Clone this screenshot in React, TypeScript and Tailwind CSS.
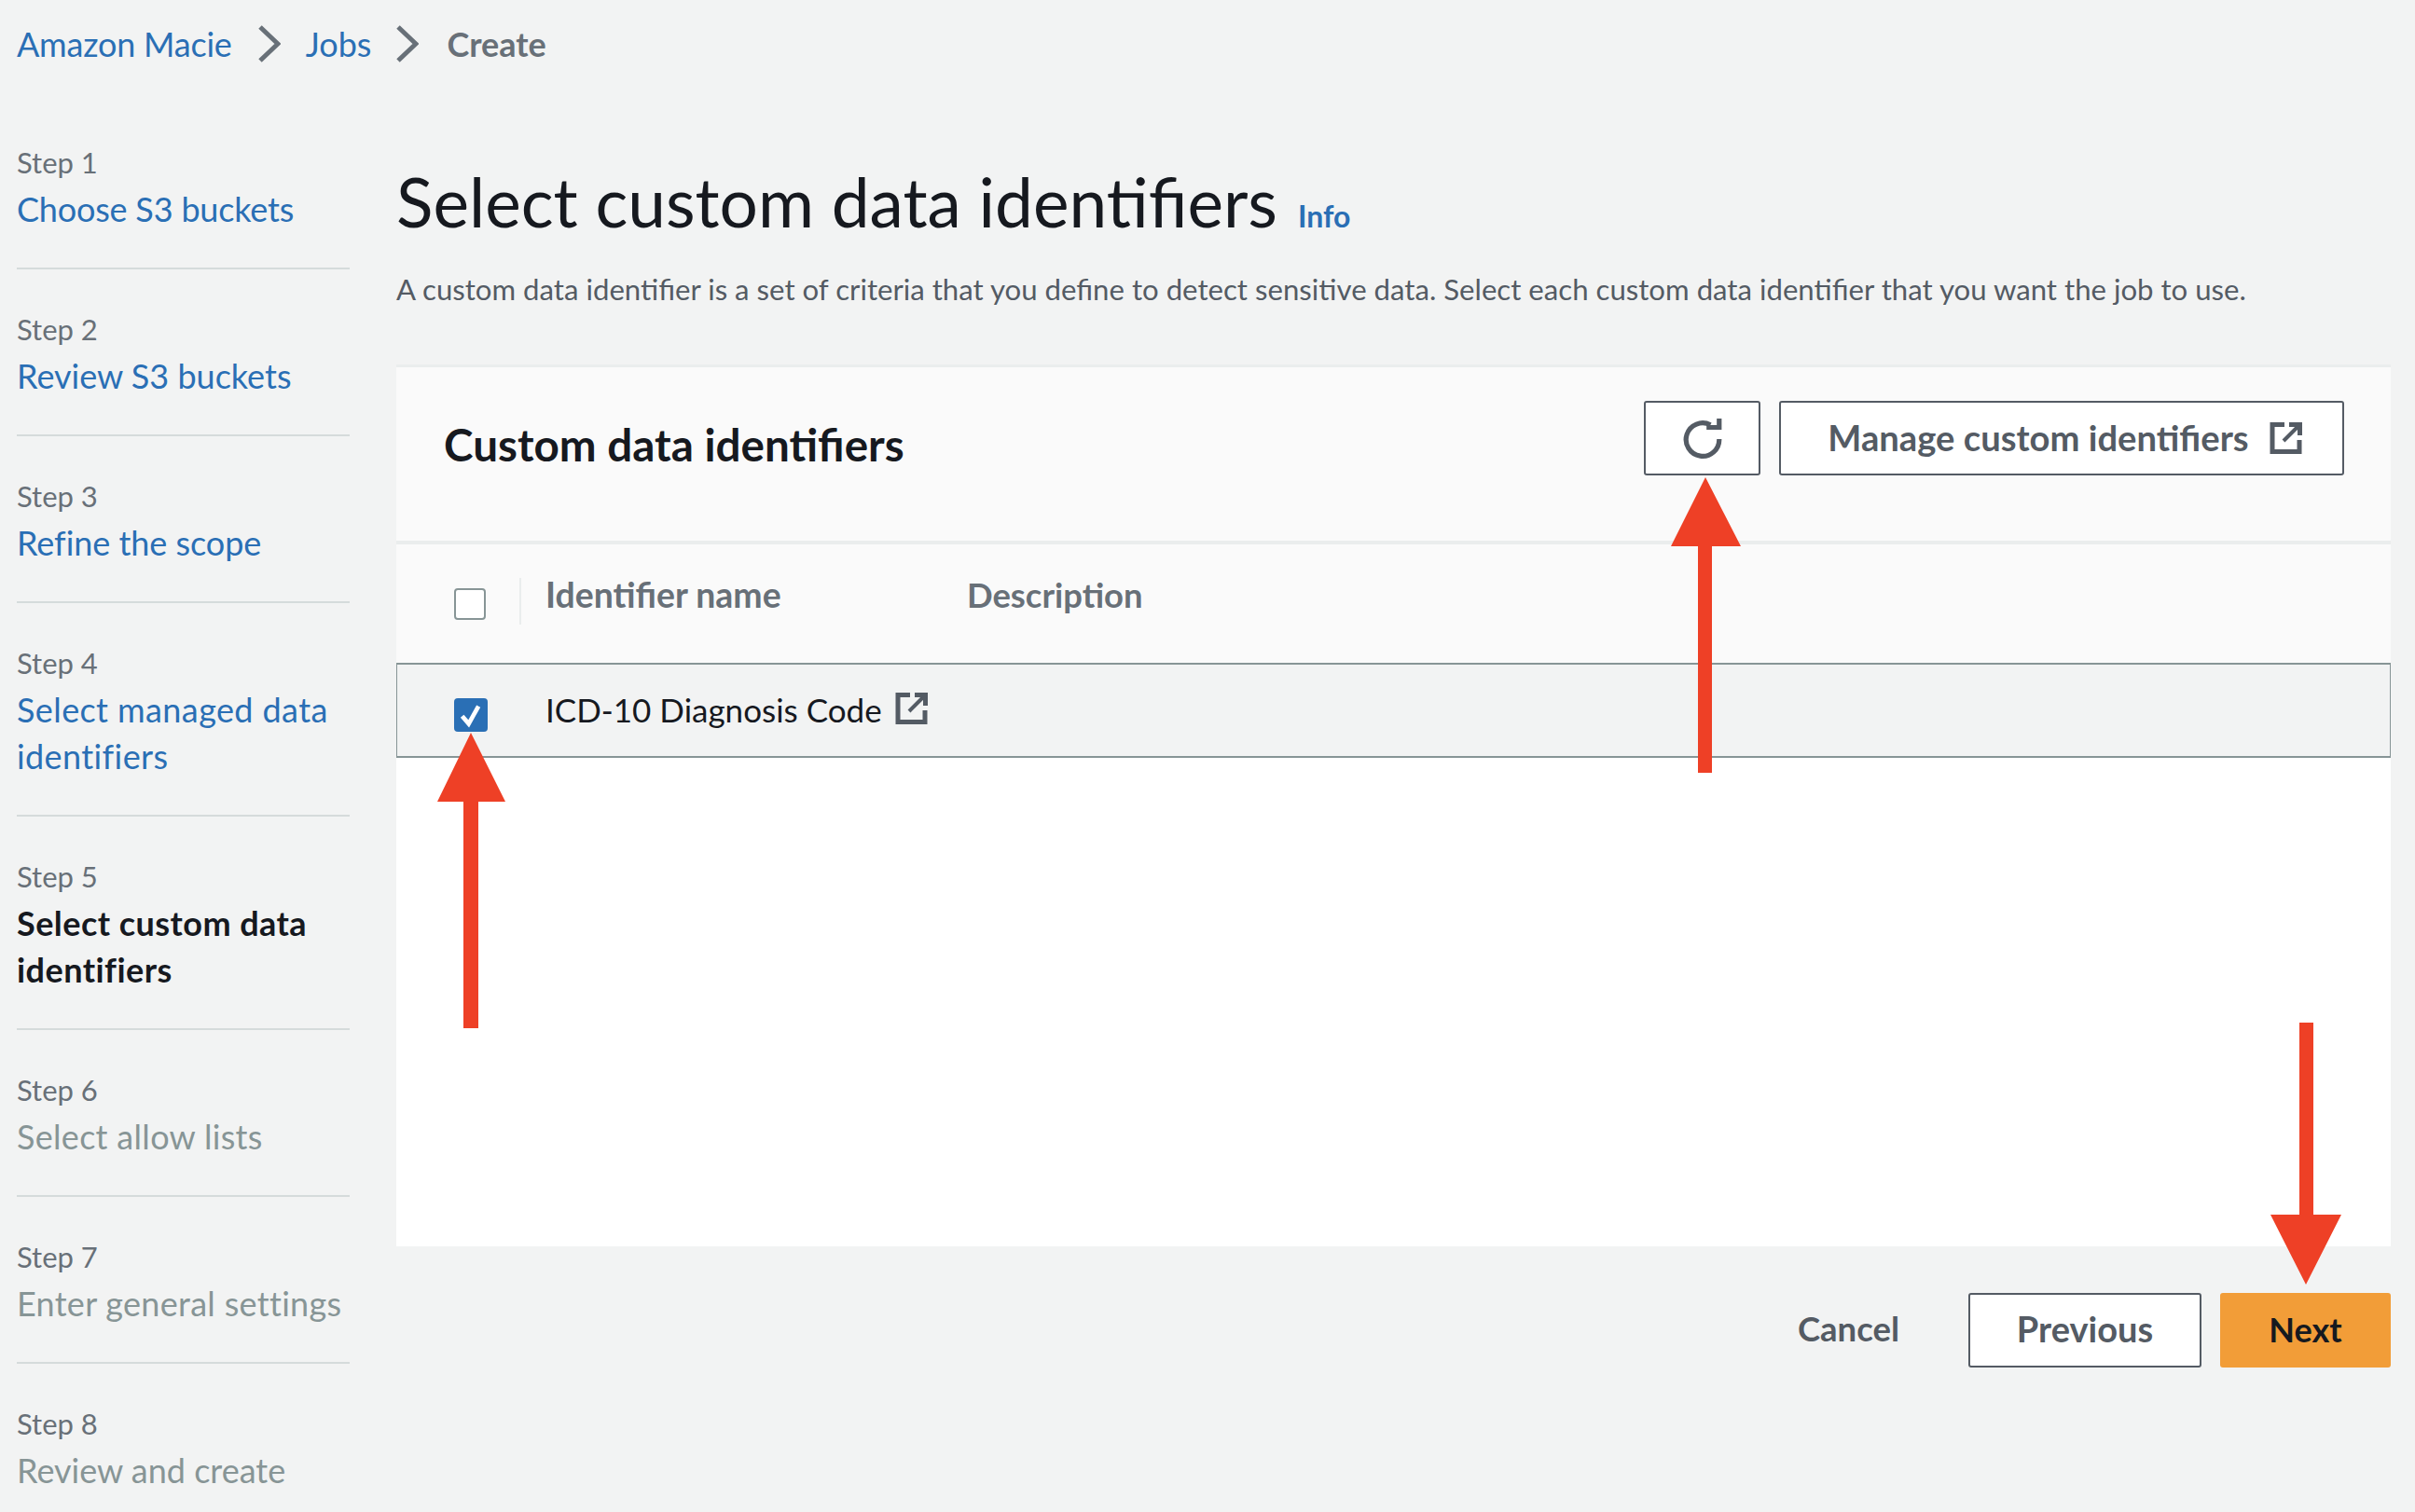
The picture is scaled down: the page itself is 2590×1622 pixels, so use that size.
const font = "font-['Lato','Noto_Sans',sans-serif]";

const steps = [
  { n: "Step 1", lines: ["Choose S3 buckets"], kind: "link", t: "tracking-[-0.2px]" },
  { n: "Step 2", lines: ["Review S3 buckets"], kind: "link", t: "tracking-[0px]" },
  { n: "Step 3", lines: ["Refine the scope"], kind: "link", t: "tracking-[-0.05px]" },
  { n: "Step 4", lines: ["Select managed data", "identifiers"], kind: "link", t: "tracking-[0.4px]" },
  { n: "Step 5", lines: ["Select custom data", "identifiers"], kind: "active", t: "tracking-[0.45px]" },
  { n: "Step 6", lines: ["Select allow lists"], kind: "off", t: "tracking-[0.3px]" },
  { n: "Step 7", lines: ["Enter general settings"], kind: "off", t: "tracking-[0.3px]" },
  { n: "Step 8", lines: ["Review and create"], kind: "off", t: "" },
];

function ExternalIcon({ className }: { className: string }) {
  return (
    <svg viewBox="0 0 36 36" className={className} fill="none" stroke="currentColor" strokeWidth="5">
      <path d="M16 3.5H3v29h29V20" />
      <path d="M15 21 32 4" strokeWidth="4" />
      <path d="M21 3.5h11.5V15" />
    </svg>
  );
}

function Chevron() {
  return (
    <svg viewBox="0 0 24 40" className="w-[24px] h-[40px] text-[#687078]" fill="none" stroke="currentColor" strokeWidth="5">
      <path d="M2 2l19 18L2 38" />
    </svg>
  );
}

export default function App() {
  return (
    <div className={`relative w-[2590px] h-[1622px] overflow-hidden bg-[#f2f3f3] ${font}`}>
      <nav className="flex items-center h-[94px] pb-0 pl-[18px] text-[36px] leading-[46px]">
        <span className="text-[#2a6fb5] tracking-[-0.2px]">Amazon Macie</span>
        <span className="ml-[28px] mr-[27px] flex"><Chevron /></span>
        <span className="text-[#2a6fb5]">Jobs</span>
        <span className="ml-[27px] mr-[30px] flex"><Chevron /></span>
        <span className="text-[#687078] font-bold">Create</span>
      </nav>

      <div className="flex">
        <aside className="w-[357px] ml-[18px] mr-[50px] shrink-0 pt-[60px]">
          {steps.map((s, i) => (
            <div key={s.n} className={i < 7 ? "border-b-2 border-[#d5dbdb] pb-[38px] mb-[44px]" : ""}>
              <div className="text-[31px] leading-[40px] text-[#687078]">{s.n}</div>
              <div
                className={`mt-[5px] text-[36px] leading-[50px] ${s.t} ${
                  s.kind === "link" ? "text-[#2a6fb5]" : s.kind === "active" ? "text-[#16191f] font-bold" : "text-[#879596]"
                }`}
              >
                {s.lines.map((l) => (
                  <div key={l}>{l}</div>
                ))}
              </div>
            </div>
          ))}
        </aside>

        <main className="w-[2139px]">
          <div className="flex items-baseline pt-[86px]">
            <h1 className="text-[73px] leading-[73px] text-[#16191f]">Select custom data identifiers</h1>
            <span className="ml-[22px] text-[32px] leading-none font-bold text-[#2a6fb5]">Info</span>
          </div>
          <p className="mt-[37px] text-[31.17px] leading-[40px] text-[#545b64]">
            A custom data identifier is a set of criteria that you define to detect sensitive data. Select each custom data identifier that you want the job to use.
          </p>

          <section className="mt-[61px] h-[946px] bg-white">
            <div className="h-[193px] bg-[#fafafa] border-t-[3px] border-b-[4px] border-[#eaeded] flex items-start justify-between pl-[51px] pr-[50px]">
              <h2 className="mt-[53px] text-[47.6px] leading-[60px] font-bold text-[#16191f]">Custom data identifiers</h2>
              <div className="flex gap-[20px] mt-[36px]">
                <button className="w-[125px] h-[80px] bg-white border-2 border-[#545b64] rounded-[3px] flex items-center justify-center text-[#545b64]">
                  <svg viewBox="0 0 40 44" className="w-[42px] h-[46px]" fill="none" stroke="currentColor" strokeWidth="5">
                    <path d="M28 8.5A17 17 0 1 0 37 23" />
                    <path d="M24 11h13V2" strokeWidth="5" />
                  </svg>
                </button>
                <button className="w-[606px] h-[80px] pl-[8px] bg-white border-2 border-[#545b64] rounded-[3px] flex items-center justify-center gap-[22px] text-[38.2px] font-bold text-[#545b64]">
                  Manage custom identifiers
                  <ExternalIcon className="w-[36px] h-[36px]" />
                </button>
              </div>
            </div>

            <div className="h-[127px] bg-[#fafafa] flex items-start">
              <div className="w-[62px] ml-0" />
              <span className="mt-[47px] w-[34px] h-[34px] bg-white border-2 border-[#879596] rounded-[4px] shrink-0" />
              <span className="ml-[36px] mt-[36px] w-[2px] h-[50px] bg-[#eaeded] shrink-0" />
              <span className="ml-[26px] mt-[31px] w-[452px] text-[37.4px] leading-[46px] font-bold text-[#687078]">Identifier name</span>
              <span className="mt-[31px] text-[36.4px] leading-[46px] font-bold text-[#687078]">Description</span>
            </div>

            <div className="h-[102px] bg-[#f2f3f3] border-y-2 border-x border-[#879596] flex items-start">
              <span className="ml-[61px] mt-[36px] w-[36px] h-[36px] bg-[#2a6fb5] rounded-[4px] flex items-center justify-center shrink-0">
                <svg viewBox="0 0 24 24" className="w-[28px] h-[28px]" fill="none" stroke="white" strokeWidth="4">
                  <path d="M4 13l6 7L19 4" />
                </svg>
              </span>
              <span className="ml-[62px] mt-[25px] text-[35px] leading-[46px] text-[#16191f]">ICD-10 Diagnosis Code</span>
              <ExternalIcon className="ml-[14px] mt-[29px] w-[36px] h-[36px] text-[#545b64]" />
            </div>
          </section>

          <div className="mt-[50px] flex items-center justify-end text-[36px] font-bold">
            <span className="text-[#545b64] mr-[74px] pb-[3px] text-[36.5px]">Cancel</span>
            <button className="w-[250px] h-[80px] pb-[3px] bg-white border-2 border-[#545b64] rounded-[3px] text-[#545b64] font-bold text-[38px]">Previous</button>
            <button className="ml-[20px] w-[183px] h-[80px] pb-[3px] bg-[#f29d38] rounded-[3px] text-[#16191f] font-bold">Next</button>
          </div>
        </main>
      </div>

      <svg className="absolute inset-0 w-[2590px] h-[1622px] pointer-events-none" viewBox="0 0 2590 1622" fill="#ee4026">
        <path d="M505 786 542 860H513V1103H497V860H469Z" />
        <path d="M1829 512 1867 586H1836V829H1821V586H1792Z" />
        <path d="M2473 1378 2511 1303H2481V1097H2466V1303H2435Z" />
      </svg>
    </div>
  );
}
